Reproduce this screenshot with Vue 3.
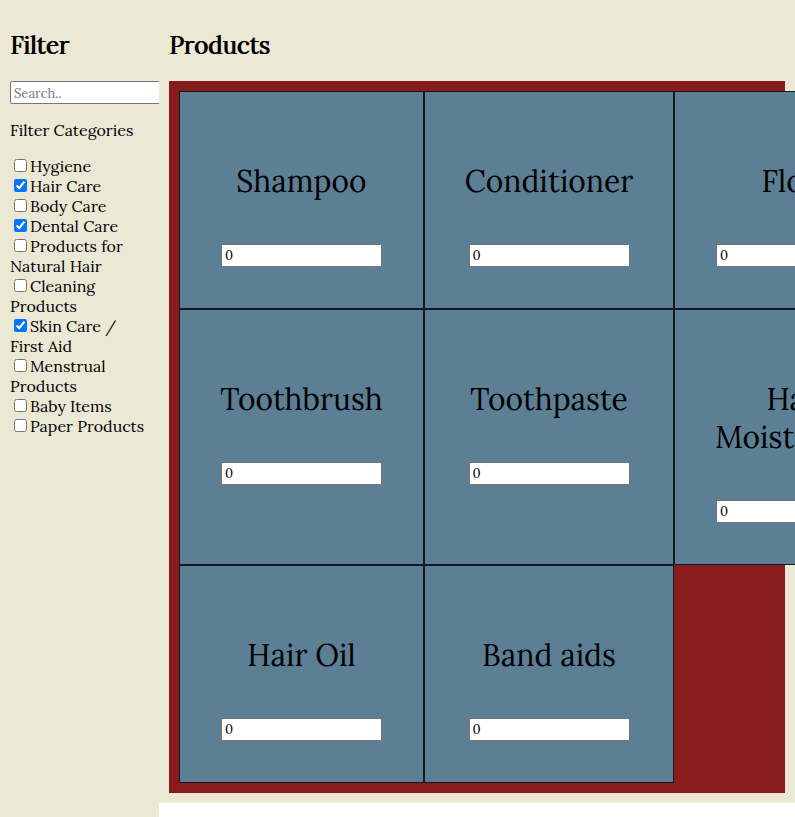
<script setup>
import { ref } from 'vue'

const search = ref('')

const categories = ref([
  { name: 'Hygiene', checked: false },
  { name: 'Hair Care', checked: true },
  { name: 'Body Care', checked: false },
  { name: 'Dental Care', checked: true },
  { name: 'Products for\nNatural Hair', checked: false },
  { name: 'Cleaning\nProducts', checked: false },
  { name: 'Skin Care /\nFirst Aid', checked: true },
  { name: 'Menstrual\nProducts', checked: false },
  { name: 'Baby Items', checked: false },
  { name: 'Paper Products', checked: false },
])

const products = ref([
  { name: 'Shampoo', amount: 0 },
  { name: 'Conditioner', amount: 0 },
  { name: 'Floss', amount: 0 },
  { name: 'Toothbrush', amount: 0 },
  { name: 'Toothpaste', amount: 0 },
  { name: 'Hair\nMoisturizer', amount: 0 },
  { name: 'Hair Oil', amount: 0 },
  { name: 'Band aids', amount: 0 },
])
</script>

<template>
  <div class="page">
    <aside class="sidebar">
      <h2>Filter</h2>
      <input v-model="search" class="field search" type="text" placeholder="Search.." aria-label="Search products" />
      <p class="caption">Filter Categories</p>
      <div v-for="(category, i) in categories" :key="i" class="category">
        <input :id="`category-${i}`" v-model="category.checked" type="checkbox" /><label :for="`category-${i}`">{{ category.name }}</label>
      </div>
    </aside>
    <main class="content">
      <h2>Products</h2>
      <div class="grid">
        <div v-for="(product, i) in products" :key="i" class="card">
          <label class="name" :for="`product-${i}`">{{ product.name }}</label>
          <input :id="`product-${i}`" v-model="product.amount" class="field" type="number" min="0" />
        </div>
      </div>
    </main>
  </div>
</template>

<style>
body {
  margin: 0;
  background: #fff;
}
</style>

<style scoped>
.page {
  display: flex;
  align-items: stretch;
  min-height: 100vh;
  font-family: Lora, "Liberation Serif", serif;
  font-size: 16px;
  line-height: 20px;
  color: #000;
}

.sidebar,
.content {
  box-sizing: border-box;
  padding: 10px;
  background: #ebe9d5;
}

.sidebar {
  flex: 0 0 20%;
  min-width: 0;
  overflow: hidden;
}

.content {
  flex: 1;
  min-width: 0;
  align-self: flex-start;
  overflow-x: auto;
  scrollbar-width: none;
}

h2 {
  margin: 20px 0 19px;
  font-size: 24px;
  line-height: 32px;
  font-weight: 400;
  text-shadow: 1px 0 0 #000;
}

.field {
  display: block;
  box-sizing: border-box;
  width: 161px;
  height: 23px;
  margin: 0;
  padding: 1px 3px;
  border: 1px solid #767676;
  border-radius: 0;
  background: #fff;
  font-family: inherit;
  font-size: 13px;
  color: #000;
}

.search {
  padding-top: 2px;
  border-radius: 2px;
}

.field::placeholder {
  color: #757575;
}

.caption {
  margin: 16px 0;
}

.category {
  white-space: pre-line;
}

.category input {
  width: 13px;
  height: 13px;
  margin: 3px 3px 3px 4px;
}

.grid {
  display: grid;
  grid-template-columns: minmax(245px, auto) minmax(250px, auto) minmax(245px, auto);
  padding: 10px;
  background: #881c1c;
}

.card {
  display: flex;
  flex-direction: column;
  align-items: center;
  gap: 44px;
  padding: 70px 40px 41px;
  border: 1px solid #12191f;
  background: #5c7f95;
}

.name {
  font-size: 30px;
  line-height: 38px;
  text-align: center;
  white-space: pre-line;
}
</style>
